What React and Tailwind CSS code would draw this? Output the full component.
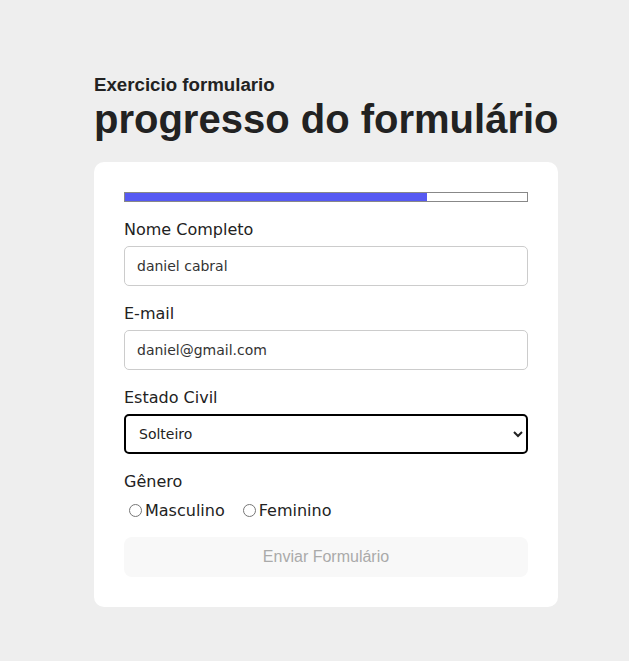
import React, { useState } from 'react';

export default function App() {
  const [nome, setNome] = useState('daniel cabral');
  const [email, setEmail] = useState('daniel@gmail.com');
  const [estado, setEstado] = useState('solteiro');
  const [genero, setGenero] = useState('');

  const labelCls = "block mb-[6px] text-[16px] leading-[21px] text-[#222] font-['DejaVu_Sans',Verdana,sans-serif]";
  const inputCls = "block w-full h-10 px-3 rounded-[5px] border border-[#ccc] bg-white text-[14px] text-[#333] font-['DejaVu_Sans',Verdana,sans-serif] outline-none";

  return (
    <div className="min-h-[661px] bg-[#eeeeee] pt-[74px] pl-[94px] font-['Liberation_Sans',Arial,sans-serif]">
      <div className="w-[464px]">
        <h2 className="text-[18.7px] leading-[22px] font-bold text-[#222]">Exercicio formulario</h2>
        <h1 className="text-[40px] leading-[46px] font-bold text-[#222] whitespace-nowrap">progresso do formulário</h1>

        <div className="mt-[20px] bg-white rounded-[10px] p-[30px] flex flex-col gap-[17px]">
          <div className="h-[10px] border border-[#888] bg-white">
            <div className="h-full w-[75%] bg-[#5659f2]" />
          </div>

          <div>
            <label className={labelCls}>Nome Completo</label>
            <input className={inputCls} value={nome} onChange={e => setNome(e.target.value)} />
          </div>

          <div>
            <label className={labelCls}>E-mail</label>
            <input className={inputCls} value={email} onChange={e => setEmail(e.target.value)} />
          </div>

          <div>
            <label className={labelCls}>Estado Civil</label>
            <select
              className="block w-full h-10 pl-[9px] pr-1 rounded-[5px] border-2 border-black bg-white text-[14px] text-[#222] font-['DejaVu_Sans',Verdana,sans-serif] outline-none"
              value={estado}
              onChange={e => setEstado(e.target.value)}
            >
              <option value="solteiro">Solteiro</option>
              <option value="casado">Casado</option>
              <option value="divorciado">Divorciado</option>
            </select>
          </div>

          <div>
            <label className={labelCls}>Gênero</label>
            <div className="mt-[9px] flex items-center h-[19px] text-[16px] text-[#222] font-['DejaVu_Sans',Verdana,sans-serif]">
              <label className="flex items-center mr-[13px]">
                <input type="radio" name="genero" className="m-0 ml-[5px] mr-[3px] w-[13px] h-[13px]" checked={genero === 'm'} onChange={() => setGenero('m')} />
                Masculino
              </label>
              <label className="flex items-center">
                <input type="radio" name="genero" className="m-0 ml-[5px] mr-[3px] w-[13px] h-[13px]" checked={genero === 'f'} onChange={() => setGenero('f')} />
                Feminino
              </label>
            </div>
          </div>

          <button disabled className="h-10 w-full rounded-[8px] bg-[#f8f8f8] text-[16px] text-[#aaa]">
            Enviar Formulário
          </button>
        </div>
      </div>
    </div>
  );
}
